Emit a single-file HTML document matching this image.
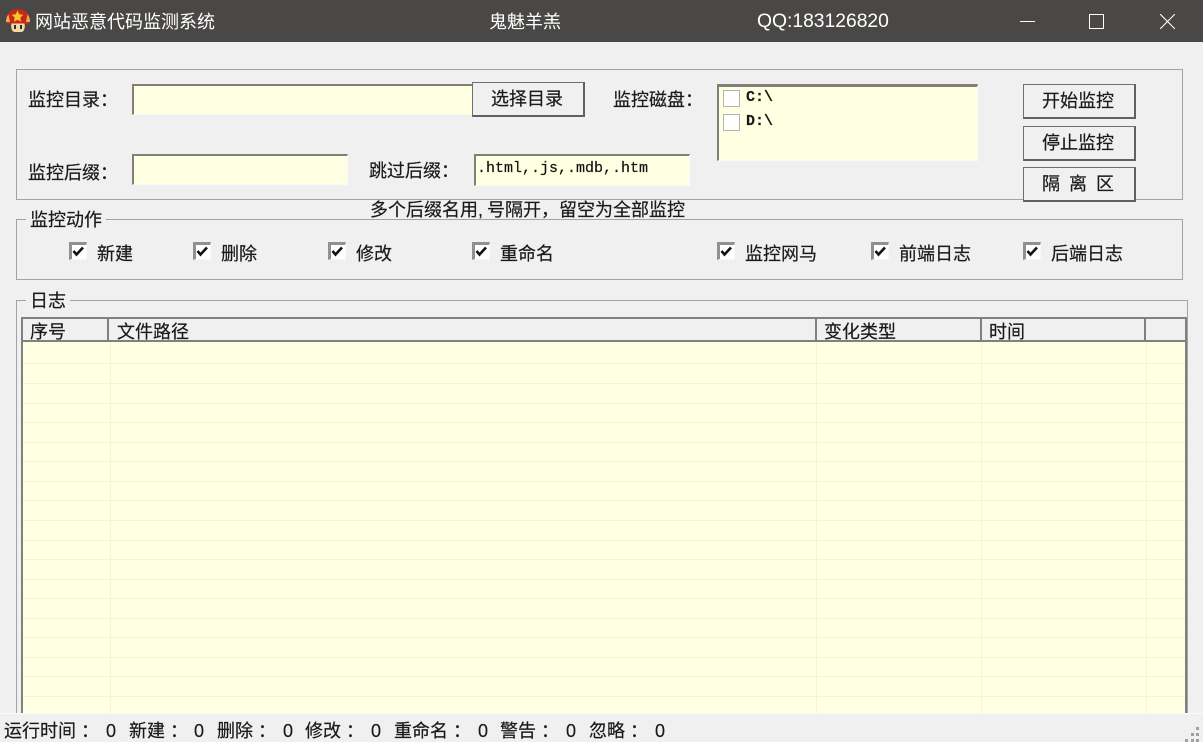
<!DOCTYPE html>
<html lang="zh"><head><meta charset="utf-8"><title>网站恶意代码监测系统</title>
<style>
html,body{margin:0;padding:0;width:1203px;height:742px;overflow:hidden;background:#f0f0f0}
body{position:relative;font-family:"Liberation Sans","WenQuanYi Zen Hei","Noto Sans CJK SC",sans-serif;font-size:18px;color:#1a1a1a;-webkit-text-stroke:.2px #1a1a1a}
div{position:absolute;box-sizing:border-box}
.t{white-space:nowrap;line-height:22px;height:22px}
.g{border:1px solid #a3a3a3}
.in{background:#ffffe2;border-top:2px solid #808076;border-left:2px solid #808076;border-right:1px solid #fafafa;border-bottom:1px solid #fafafa}
.b{background:#f0f0f0;border:1px solid #707070;border-right:2px solid #606060;border-bottom:2px solid #606060;text-align:center;line-height:33px;white-space:nowrap;padding-right:2px}
.c{width:18px;height:18px;background:#fff;border-top:3px solid #909090;border-left:3px solid #909090;border-right:1px solid #f8f8f8;border-bottom:1px solid #f8f8f8}
.c svg{position:absolute;left:0;top:0}
.u{width:17px;height:17px;background:#fff;border:1px solid #b4b4b4}
.h{background:#808080}
.r{left:23px;width:1162px;height:1px;background:#f3f3da}
.v{top:342px;height:371px;width:1px;background:#f3f3da}
.tt{color:#fff;-webkit-text-stroke:0}
.m{font-family:"Liberation Mono",monospace;font-size:15px;font-weight:400}
.k{position:relative;left:5px}
.cm{display:inline-block;width:9px}
</style></head><body>

<div style="left:0;top:0;width:1203px;height:42px;background:#4a4846"></div>
<svg style="position:absolute;left:5px;top:8px" width="26" height="26" viewBox="0 0 26 26">
<path d="M1 13C1 5.500 6 1 13 1s12 4.500 12 12c0 2-1.500 3-3 3H4c-1.500 0-3-1-3-3z" fill="#c8281c"/>
<path d="M1 14C1 11 2 8 3.500 6.500L5 14zM25 14c0-3-1-6-2.500-7.500L21 14z" fill="#e8b050"/>
<path d="M12.500 2.500l1.700 3.800 4.100.5-3 2.800.8 4.100-3.600-2-3.600 2 .8-4.100-3-2.800 4.100-.5z" fill="#f6c62a"/>
<path d="M6.500 15.500h13c1 4-.5 8.500-3 8.500h-7c-2.500 0-4-4.500-3-8.500z" fill="#f0d8a8"/>
<rect x="9" y="17" width="2" height="4" fill="#3a2a1a"/><rect x="15" y="17" width="2" height="4" fill="#3a2a1a"/>
</svg>
<div class="t tt" style="left:35px;top:11px">网站恶意代码监测系统</div>
<div class="t tt" style="left:489px;top:11px">鬼魅羊羔</div>
<div class="t tt" style="left:757px;top:11px;font-size:19.300px">QQ:183126820</div>
<div style="left:1020px;top:21px;width:15px;height:1px;background:#fff"></div>
<div style="left:1089px;top:14px;width:15px;height:15px;border:1px solid #fff"></div>
<svg style="position:absolute;left:1160px;top:14px" width="15" height="15" viewBox="0 0 15 15"><path d="M0 0L15 15M15 0L0 15" stroke="#fff" stroke-width="1.100" fill="none"/></svg>

<div class="g" style="left:16px;top:69px;width:1167px;height:131px"></div>
<div class="t" style="left:28px;top:89px">监控目录：</div>
<div class="in" style="left:132px;top:84px;width:344px;height:31px"></div>
<div class="b" style="left:472px;top:82px;width:113px;height:35px">选择目录</div>
<div class="t" style="left:613px;top:89px">监控磁盘：</div>
<div class="in" style="left:717px;top:84px;width:261px;height:77px;border-top-width:3px;border-left-width:2px"></div>
<div class="u" style="left:723px;top:90px"></div>
<div class="u" style="left:723px;top:114px"></div>
<div class="t m" style="left:746px;top:87px;font-weight:700">C:\</div>
<div class="t m" style="left:746px;top:111px;font-weight:700">D:\</div>
<div class="b" style="left:1023px;top:84px;width:113px;height:35px">开始监控</div>
<div class="b" style="left:1023px;top:126px;width:113px;height:35px">停止监控</div>
<div class="b" style="left:1023px;top:167px;width:113px;height:35px;word-spacing:4px">隔 离 区</div>
<div class="t" style="left:28px;top:162px">监控后缀：</div>
<div class="in" style="left:132px;top:154px;width:216px;height:31px"></div>
<div class="t" style="left:369px;top:160px">跳过后缀：</div>
<div class="in" style="left:474px;top:154px;width:216px;height:32px"></div>
<div class="t m" style="left:477px;top:158px;color:#111">.html,.js,.mdb,.htm</div>
<div class="g" style="left:16px;top:219px;width:1167px;height:61px"></div>
<div class="t" style="left:370px;top:199px">多个后缀名用<span class="cm">,</span>号隔开，留空为全部监控</div>
<div class="t" style="left:26px;top:209px;background:#f0f0f0;padding:0 4px">监控动作</div>

<div class="c" style="left:69px;top:242px"><svg width="14" height="14" viewBox="0 0 14 14"><path d="M1.500 6l3 3.500 6.500-7" stroke="#111" stroke-width="2.600" fill="none"/></svg></div>
<div class="t" style="left:97px;top:243px">新建</div>
<div class="c" style="left:193px;top:242px"><svg width="14" height="14" viewBox="0 0 14 14"><path d="M1.500 6l3 3.500 6.500-7" stroke="#111" stroke-width="2.600" fill="none"/></svg></div>
<div class="t" style="left:221px;top:243px">删除</div>
<div class="c" style="left:328px;top:242px"><svg width="14" height="14" viewBox="0 0 14 14"><path d="M1.500 6l3 3.500 6.500-7" stroke="#111" stroke-width="2.600" fill="none"/></svg></div>
<div class="t" style="left:356px;top:243px">修改</div>
<div class="c" style="left:472px;top:242px"><svg width="14" height="14" viewBox="0 0 14 14"><path d="M1.500 6l3 3.500 6.500-7" stroke="#111" stroke-width="2.600" fill="none"/></svg></div>
<div class="t" style="left:500px;top:243px">重命名</div>
<div class="c" style="left:717px;top:242px"><svg width="14" height="14" viewBox="0 0 14 14"><path d="M1.500 6l3 3.500 6.500-7" stroke="#111" stroke-width="2.600" fill="none"/></svg></div>
<div class="t" style="left:745px;top:243px">监控网马</div>
<div class="c" style="left:871px;top:242px"><svg width="14" height="14" viewBox="0 0 14 14"><path d="M1.500 6l3 3.500 6.500-7" stroke="#111" stroke-width="2.600" fill="none"/></svg></div>
<div class="t" style="left:899px;top:243px">前端日志</div>
<div class="c" style="left:1023px;top:242px"><svg width="14" height="14" viewBox="0 0 14 14"><path d="M1.500 6l3 3.500 6.500-7" stroke="#111" stroke-width="2.600" fill="none"/></svg></div>
<div class="t" style="left:1051px;top:243px">后端日志</div>

<div class="g" style="left:16px;top:300px;width:1172px;height:430px"></div>
<div class="t" style="left:26px;top:291px;background:#f0f0f0;padding:0 4px;height:20px;line-height:20px">日志</div>

<div style="left:23px;top:342px;width:1162px;height:371px;background:#ffffe2"></div>
<div class="r" style="top:363px"></div><div class="r" style="top:383px"></div><div class="r" style="top:403px"></div><div class="r" style="top:422px"></div><div class="r" style="top:442px"></div><div class="r" style="top:461px"></div><div class="r" style="top:481px"></div><div class="r" style="top:500px"></div><div class="r" style="top:520px"></div><div class="r" style="top:540px"></div><div class="r" style="top:559px"></div><div class="r" style="top:579px"></div><div class="r" style="top:598px"></div><div class="r" style="top:618px"></div><div class="r" style="top:637px"></div><div class="r" style="top:657px"></div><div class="r" style="top:676px"></div><div class="r" style="top:696px"></div>
<div class="v" style="left:110px"></div><div class="v" style="left:816px"></div><div class="v" style="left:981px"></div><div class="v" style="left:1146px"></div>

<div class="h" style="left:21px;top:317px;width:1166px;height:2px"></div>
<div class="h" style="left:21px;top:340px;width:1166px;height:2px"></div>
<div class="h" style="left:21px;top:317px;width:2px;height:396px"></div>
<div class="h" style="left:1185px;top:317px;width:2px;height:396px"></div>
<div class="h" style="left:107px;top:319px;width:2px;height:21px"></div>
<div class="h" style="left:815px;top:319px;width:2px;height:21px"></div>
<div class="h" style="left:980px;top:319px;width:2px;height:21px"></div>
<div class="h" style="left:1144px;top:319px;width:2px;height:21px"></div>
<div class="t" style="left:30px;top:321px;height:20px;overflow:hidden">序号</div>
<div class="t" style="left:117px;top:321px;height:20px;overflow:hidden">文件路径</div>
<div class="t" style="left:824px;top:321px;height:20px;overflow:hidden">变化类型</div>
<div class="t" style="left:989px;top:321px;height:20px;overflow:hidden">时间</div>

<div style="left:0;top:713px;width:1203px;height:29px;background:#f0f0f0;border-top:1px solid #fbfbfb"></div>
<div class="t" style="left:4px;top:720px">运行时间<span class="k">：</span></div><div class="t" style="left:106px;top:720px">0</div>
<div class="t" style="left:129px;top:720px">新建<span class="k">：</span></div><div class="t" style="left:194px;top:720px">0</div>
<div class="t" style="left:217px;top:720px">删除<span class="k">：</span></div><div class="t" style="left:283px;top:720px">0</div>
<div class="t" style="left:305px;top:720px">修改<span class="k">：</span></div><div class="t" style="left:371px;top:720px">0</div>
<div class="t" style="left:394px;top:720px">重命名<span class="k">：</span></div><div class="t" style="left:478px;top:720px">0</div>
<div class="t" style="left:500px;top:720px">警告<span class="k">：</span></div><div class="t" style="left:566px;top:720px">0</div>
<div class="t" style="left:589px;top:720px">忽略<span class="k">：</span></div><div class="t" style="left:655px;top:720px">0</div>
<svg style="position:absolute;left:1184px;top:724px" width="19" height="18" viewBox="0 0 19 18" fill="#a0a0a0">
<rect x="12" y="3" width="3" height="3"/><rect x="7" y="9" width="3" height="3"/><rect x="12" y="9" width="3" height="3"/><rect x="1" y="15" width="3" height="3"/><rect x="7" y="15" width="3" height="3"/><rect x="12" y="15" width="3" height="3"/>
</svg>
</body></html>
